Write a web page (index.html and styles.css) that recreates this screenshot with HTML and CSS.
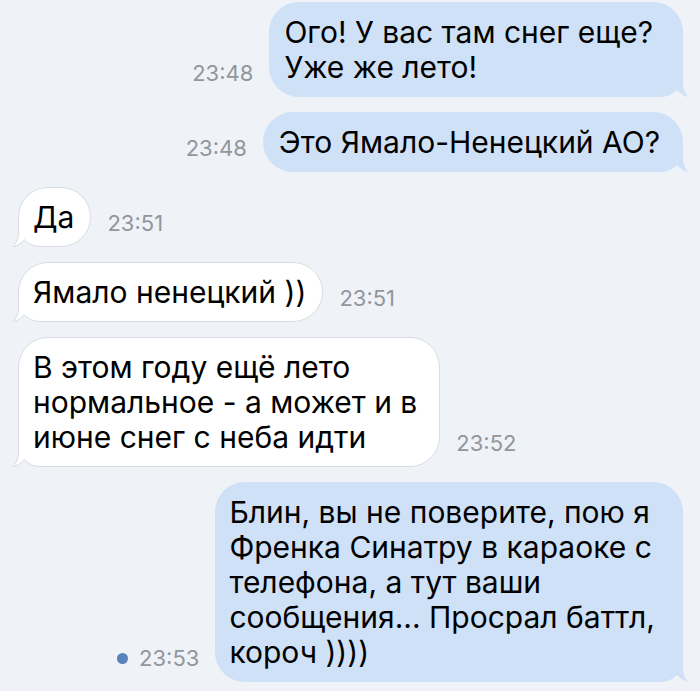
FILE: index.html
```html
<!DOCTYPE html>
<html lang="ru">
<head>
<meta charset="utf-8">
<link rel="stylesheet" href="styles.css">
</head>
<body>
<div class="chat">
  <div class="row out">
    <span class="time">23:48</span>
    <div class="bubble out-b pr-30">Ого! У вас там снег еще?<br>Уже же лето!<svg class="tail tail-out" width="12" height="26" viewBox="0 0 12 26"><path d="M6 0 L0 0 L0 19.1 C3 22.5 7 25 11 26 C8.5 23 6 18 6 12 Z"/></svg></div>
  </div>
  <div class="row out">
    <span class="time">23:48</span>
    <div class="bubble out-b">Это Ямало-Ненецкий АО?<svg class="tail tail-out" width="12" height="26" viewBox="0 0 12 26"><path d="M6 0 L0 0 L0 19.1 C3 22.5 7 25 11 26 C8.5 23 6 18 6 12 Z"/></svg></div>
  </div>
  <div class="row in">
    <div class="bubble in-b">Да<svg class="tail tail-in" width="12" height="26" viewBox="0 0 12 26"><path class="f" d="M6.5 0 L12 0 L12 19.1 C9 22.5 5 25 1 26 C3.5 23 6.5 18 6.5 12 Z"/><path class="s" d="M6.5 0 L6.5 12 C6.5 18 3.5 23 1 26 C5 25 9 22.5 12 19.1"/></svg></div>
    <span class="time">23:51</span>
  </div>
  <div class="row in">
    <div class="bubble in-b">Ямало ненецкий ))<svg class="tail tail-in" width="12" height="26" viewBox="0 0 12 26"><path class="f" d="M6.5 0 L12 0 L12 19.1 C9 22.5 5 25 1 26 C3.5 23 6.5 18 6.5 12 Z"/><path class="s" d="M6.5 0 L6.5 12 C6.5 18 3.5 23 1 26 C5 25 9 22.5 12 19.1"/></svg></div>
    <span class="time">23:51</span>
  </div>
  <div class="row in">
    <div class="bubble in-b wide-in">В этом году ещё лето<br>нормальное - а может и в<br>июне снег с неба идти<svg class="tail tail-in" width="12" height="26" viewBox="0 0 12 26"><path class="f" d="M6.5 0 L12 0 L12 19.1 C9 22.5 5 25 1 26 C3.5 23 6.5 18 6.5 12 Z"/><path class="s" d="M6.5 0 L6.5 12 C6.5 18 3.5 23 1 26 C5 25 9 22.5 12 19.1"/></svg></div>
    <span class="time">23:52</span>
  </div>
  <div class="row out">
    <span class="time"><span class="dot"></span>23:53</span>
    <div class="bubble out-b wide-out">Блин, вы не поверите, пою я<br>Френка Синатру в караоке с<br>телефона, а тут ваши<br>сообщения... Просрал баттл,<br>короч ))))<svg class="tail tail-out" width="12" height="26" viewBox="0 0 12 26"><path d="M6 0 L0 0 L0 19.1 C3 22.5 7 25 11 26 C8.5 23 6 18 6 12 Z"/></svg></div>
  </div>
</div>
</body>
</html>
```
FILE: styles.css
```css
html, body {
  margin: 0;
  padding: 0;
  background: #eff2f7;
}
body {
  font-family: Inter, "Noto Sans", "Liberation Sans", sans-serif;
  color: #000;
}
.chat {
  display: flex;
  flex-direction: column;
  gap: 15px;
  padding: 2px 17px 0 18px;
}
.row {
  display: flex;
  align-items: flex-end;
  gap: 16px;
}
.row.out {
  justify-content: flex-end;
}
.time {
  font-size: 22px;
  line-height: 26px;
  margin-bottom: 11px;
  color: #92969d;
  display: flex;
  align-items: center;
  white-space: nowrap;
}
.dot {
  width: 11px;
  height: 11px;
  border-radius: 50%;
  background: #5a82bd;
  margin-right: 11px;
}
.bubble {
  position: relative;
  font-size: 30px;
  line-height: 35px;
  white-space: nowrap;
  border-radius: 30px;
  box-sizing: border-box;
}
.out-b {
  background: #cfe1f7;
  padding: 12.5px 23px 12.5px 16px;
  border-bottom-right-radius: 22px;
}
.pr-30 {
  padding-right: 30px;
  padding-left: 15px;
}
.in-b {
  background: #fff;
  border: 1px solid #d9dde3;
  padding: 11.5px 16px 11.5px 14px;
  border-bottom-left-radius: 22px;
}
.wide-in {
  padding-right: 22px;
}
.wide-out {
  padding-right: 28px;
  padding-left: 14px;
}
.tail {
  position: absolute;
  bottom: 0;
  display: block;
}
.tail-out {
  right: -6px;
  fill: #cfe1f7;
}
.tail-in {
  left: -7px;
  bottom: -1px;
}
.tail-in .f {
  fill: #fff;
}
.tail-in .s {
  fill: none;
  stroke: #d9dde3;
  stroke-width: 1;
}
```
